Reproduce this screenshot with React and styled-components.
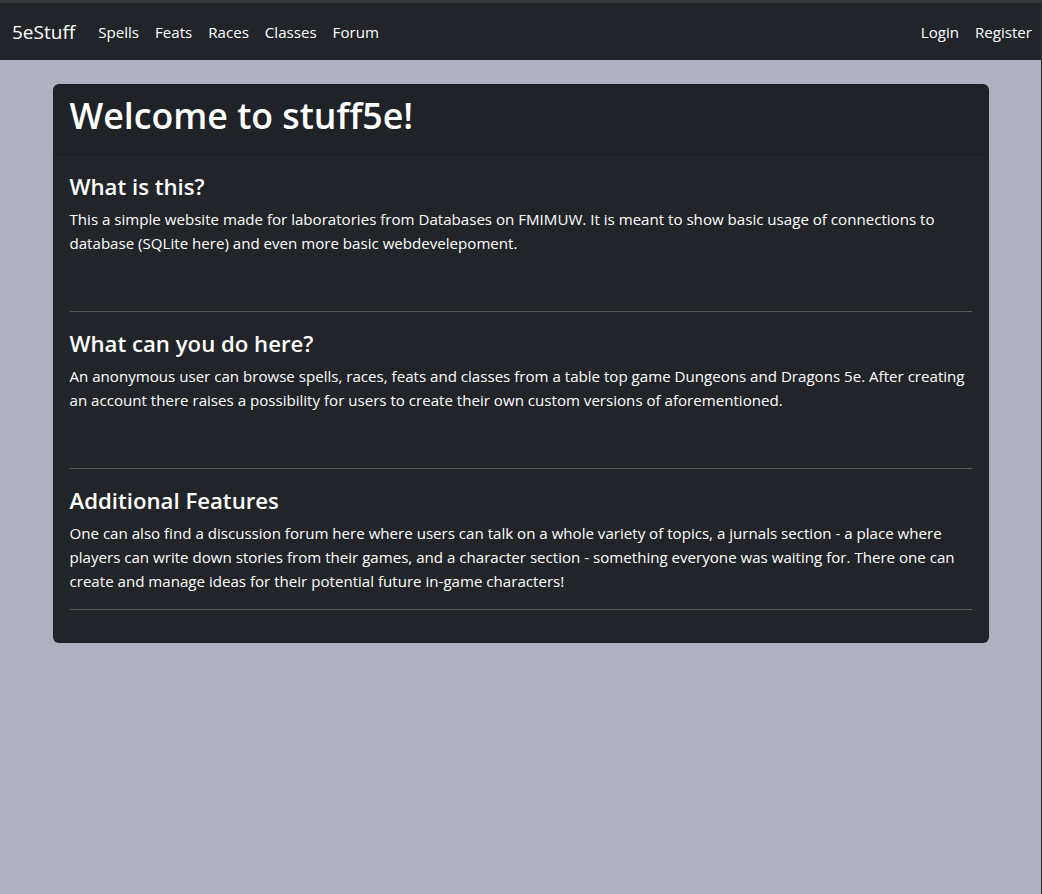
import React from 'react';
import styled, { createGlobalStyle } from 'styled-components';

const GlobalStyle = createGlobalStyle`
  html, body {
    margin: 0;
    padding: 0;
  }
  body {
    min-height: 894px;
    background-color: #b1b0c1;
    border-top: 3px solid #35363a;
    border-right: 1px solid #2d2e32;
    box-sizing: border-box;
    font-family: "Open Sans", "Noto Sans", sans-serif;
    font-size: 15.1px;
    line-height: 24px;
    color: #ffffff;
  }
`;

const Navbar = styled.nav`
  display: flex;
  align-items: center;
  height: 57px;
  padding: 0 1px 0 12px;
  background-color: #212529;
`;

const Brand = styled.a`
  font-size: 19px;
  margin-right: 15px;
  color: #ffffff;
  text-decoration: none;
`;

const NavList = styled.div`
  display: flex;
  margin-left: ${(p) => (p.right ? 'auto' : '0')};
`;

const NavLink = styled.a`
  padding: 8px;
  color: #ffffff;
  text-decoration: none;
`;

const Container = styled.main`
  width: 936px;
  margin: 24px auto 0;
`;

const Card = styled.section`
  background-color: #212529;
  border: 1px solid rgba(0, 0, 0, 0.175);
  border-radius: 6px;
  overflow: hidden;
`;

const CardHeader = styled.header`
  padding: 8px 16px;
  background-color: rgba(0, 0, 0, 0.03);
  border-bottom: 1px solid rgba(0, 0, 0, 0.175);
`;

const Title = styled.h1`
  margin: 0 0 8px;
  font-size: 35.7px;
  font-weight: 600;
  line-height: 45px;
`;

const CardBody = styled.div`
  padding: 16px;
`;

const Heading = styled.h3`
  margin: 0 0 6px;
  padding-top: 2px;
  font-size: 22.2px;
  font-weight: 600;
  line-height: 28px;
`;

const Text = styled.p`
  margin: 0 0 16px;
`;

const Spacer = styled.p`
  height: 24px;
  margin: 0 0 16px;
`;

const Rule = styled.hr`
  margin: 16px 0;
  border: 0;
  border-top: 1px solid rgba(255, 255, 255, 0.25);
`;

const sections = [
  {
    title: 'What is this?',
    text: 'This a simple website made for laboratories from Databases on FMIMUW. It is meant to show basic usage of connections to database (SQLite here) and even more basic webdevelepoment.',
    spacer: true,
  },
  {
    title: 'What can you do here?',
    text: 'An anonymous user can browse spells, races, feats and classes from a table top game Dungeons and Dragons 5e. After creating an account there raises a possibility for users to create their own custom versions of aforementioned.',
    spacer: true,
  },
  {
    title: 'Additional Features',
    text: 'One can also find a discussion forum here where users can talk on a whole variety of topics, a jurnals section - a place where players can write down stories from their games, and a character section - something everyone was waiting for. There one can create and manage ideas for their potential future in-game characters!',
    spacer: false,
  },
];

const App = () => (
  <>
    <GlobalStyle />
    <Navbar>
      <Brand href="#">5eStuff</Brand>
      <NavList>
        <NavLink href="#">Spells</NavLink>
        <NavLink href="#">Feats</NavLink>
        <NavLink href="#">Races</NavLink>
        <NavLink href="#">Classes</NavLink>
        <NavLink href="#">Forum</NavLink>
      </NavList>
      <NavList right>
        <NavLink href="#">Login</NavLink>
        <NavLink href="#">Register</NavLink>
      </NavList>
    </Navbar>
    <Container>
      <Card>
        <CardHeader>
          <Title>Welcome to stuff5e!</Title>
        </CardHeader>
        <CardBody>
          {sections.map((s, i) => (
            <div key={`section-${i}`}>
              <Heading>{s.title}</Heading>
              <Text>{s.text}</Text>
              {s.spacer ? <Spacer /> : null}
              <Rule />
            </div>
          ))}
        </CardBody>
      </Card>
    </Container>
  </>
);

export default App;
